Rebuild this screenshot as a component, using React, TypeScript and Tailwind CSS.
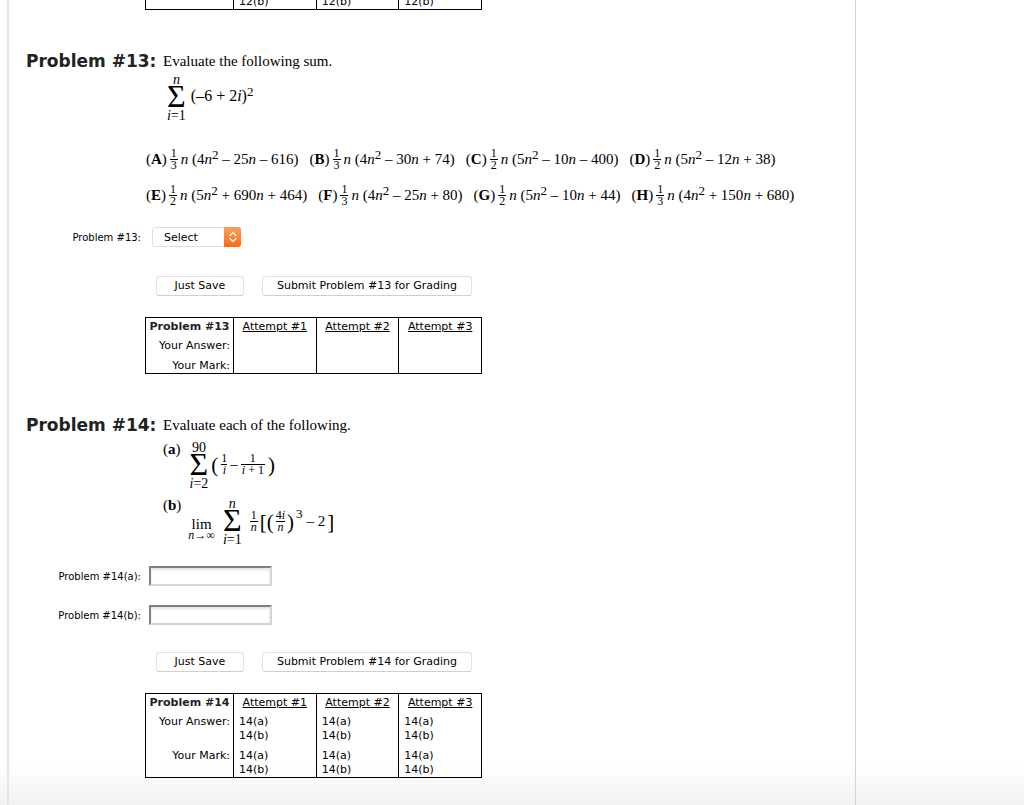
import type { ReactNode } from "react";

function Frac({ top, bottom }: { top: ReactNode; bottom: ReactNode }) {
  return (
    <span className="inline-flex flex-col items-center text-[12px] leading-[11px]">
      <span>{top}</span>
      <span className="w-full border-t border-black px-px text-center">{bottom}</span>
    </span>
  );
}

function Sum({ from, to }: { from: string; to: ReactNode }) {
  return (
    <span className="flex flex-col items-center text-[14px]">
      <span className="leading-[10px]">{to}</span>
      <span className="text-[32px] leading-[22px]">Σ</span>
      <span className="leading-[17px]">
        <i>i</i>={from}
      </span>
    </span>
  );
}

type Option = { letter: string; den: string; lead: string; mid: string; end: string };

const optionRows: Option[][] = [
  [
    { letter: "A", den: "3", lead: "4", mid: "– 25", end: "– 616" },
    { letter: "B", den: "3", lead: "4", mid: "– 30", end: "+ 74" },
    { letter: "C", den: "2", lead: "5", mid: "– 10", end: "– 400" },
    { letter: "D", den: "2", lead: "5", mid: "– 12", end: "+ 38" },
  ],
  [
    { letter: "E", den: "2", lead: "5", mid: "+ 690", end: "+ 464" },
    { letter: "F", den: "3", lead: "4", mid: "– 25", end: "+ 80" },
    { letter: "G", den: "2", lead: "5", mid: "– 10", end: "+ 44" },
    { letter: "H", den: "3", lead: "4", mid: "+ 150", end: "+ 680" },
  ],
];

function Choice({ letter, den, lead, mid, end }: Option) {
  return (
    <span className="flex items-center whitespace-nowrap">
      <span>
        (<b>{letter}</b>)
      </span>
      <span className="mx-[3px] flex">
        <Frac top="1" bottom={den} />
      </span>
      <span>
        <i>n</i> ({lead}
        <i>n</i>
        <sup className="top-[-5px] text-[13px]">2</sup> {mid}
        <i>n</i> {end})
      </span>
    </span>
  );
}

function Heading({ n, children }: { n: number; children: ReactNode }) {
  return (
    <div className="flex items-start pl-[17px] leading-5">
      <h2 className="w-[137px] shrink-0 whitespace-nowrap font-['DejaVu_Sans',sans-serif] text-[17px] leading-5 font-bold text-[#222]">
        Problem #{n}:
      </h2>
      <p>{children}</p>
    </div>
  );
}

function Buttons({ n }: { n: number }) {
  const style =
    "h-5 rounded-[3px] border border-[#e2e2e2] border-b-[#cfcfcf] bg-white text-[11px] leading-4 text-black";
  return (
    <div className="flex gap-[18px] pl-[147px] font-['DejaVu_Sans',sans-serif]">
      <button type="button" className={style + " w-[88px]"}>
        Just Save
      </button>
      <button type="button" className={style + " w-[210px] whitespace-nowrap"}>
        Submit Problem #{n} for Grading
      </button>
    </div>
  );
}

const tableStyle =
  "ml-[136px] w-[337px] table-fixed border-separate border-spacing-0 border border-black font-['DejaVu_Sans',sans-serif] text-[11px] leading-[14px]";

function Attempts({ n, parts }: { n: number; parts: string[] }) {
  const rows = ["Your Answer:", "Your Mark:"];
  return (
    <table className={tableStyle}>
      <thead>
        <tr>
          <th scope="col" className="w-[87px] whitespace-nowrap py-0.5 font-bold text-[#222]">
            Problem #{n}
          </th>
          {[1, 2, 3].map((k) => (
            <th key={k} scope="col" className="border-l border-black py-0.5 font-normal underline">
              Attempt #{k}
            </th>
          ))}
        </tr>
      </thead>
      <tbody>
        {rows.map((r) => (
          <tr key={r} className="last:[&>*]:pb-0">
            <th scope="row" className="whitespace-nowrap pt-[3px] pr-[3px] pb-[3px] text-right align-top font-normal">
              {r}
            </th>
            {[1, 2, 3].map((k) => (
              <td key={k} className="border-l border-black pt-[3px] pb-[3px] pl-[5px] align-top">
                {parts.map((p) => (
                  <div key={p}>
                    {n}({p})
                  </div>
                ))}
              </td>
            ))}
          </tr>
        ))}
      </tbody>
    </table>
  );
}

export default function App() {
  const label =
    "w-[132px] shrink-0 whitespace-nowrap text-right font-['DejaVu_Sans',sans-serif] text-[10px]";
  const field =
    "h-5 w-[123px] border-2 border-t-[#808080] border-r-[#d4d4d4] border-b-[#d4d4d4] border-l-[#808080] bg-white px-1 text-[12px] shadow-[inset_0_2px_3px_#e4e4e4]";
  return (
    <div className="min-h-screen bg-[linear-gradient(to_top,#f2f2f2,#ffffff_40px)] pl-[7px] font-['Liberation_Serif',serif] text-[15px] text-black">
      <main className="min-h-screen w-full max-w-[849px] border-r border-l-2 border-r-[#d4d4d4] border-l-[#e6e6e6]">
        <div className="flex h-[10px] items-end overflow-hidden">
          <table className={tableStyle}>
            <tbody>
              <tr>
                <td className="w-[87px]" />
                {[1, 2, 3].map((k) => (
                  <td key={k} className="border-l border-black pl-[5px]">
                    12(b)
                  </td>
                ))}
              </tr>
            </tbody>
          </table>
        </div>

        <section className="pt-[41px]">
          <Heading n={13}>Evaluate the following sum.</Heading>
          <div className="flex items-center gap-[5px] pt-1 pl-[158px]">
            <Sum from="1" to={<i>n</i>} />
            <span className="pb-2 text-[16px]">
              (–6 + 2<i>i</i>)<sup className="top-[-5px] text-[13px]">2</sup>
            </span>
          </div>
          <div className="pt-[17px] pl-[137px]">
            {optionRows.map((row) => (
              <div key={row[0].letter} className="flex h-9 items-center gap-[11px]">
                {row.map((o) => (
                  <Choice key={o.letter} {...o} />
                ))}
              </div>
            ))}
          </div>
          <div className="flex items-center gap-[11px] pt-[14px]">
            <label htmlFor="p13" className={label}>
              Problem #13:
            </label>
            <div className="relative">
              <select
                id="p13"
                className="block h-5 w-[89px] appearance-none rounded-[3px] border border-[#dedede] bg-white pt-px pl-[11px] font-['DejaVu_Sans',sans-serif] text-[11px] leading-4"
              >
                <option>Select</option>
                {"ABCDEFGH".split("").map((c) => (
                  <option key={c}>{c}</option>
                ))}
              </select>
              <span className="pointer-events-none absolute inset-y-0 right-0 flex w-[17px] items-center justify-center rounded-r-[3px] bg-linear-to-b from-[#fba055] to-[#f96a0a]">
                <svg viewBox="0 0 8 12" className="h-3 w-2" fill="none" stroke="white" strokeWidth="1.3" strokeLinecap="round" strokeLinejoin="round">
                  <path d="M1 4.5 4 1.5 7 4.5M1 7.5 4 10.5 7 7.5" />
                </svg>
              </span>
            </div>
          </div>
          <div className="pt-[29px] pb-[21px]">
            <Buttons n={13} />
          </div>
          <Attempts n={13} parts={[]} />
        </section>

        <section className="pt-[41px]">
          <Heading n={14}>Evaluate each of the following.</Heading>
          <div className="flex items-start gap-[9px] pt-1 pl-[154px]">
            <span className="leading-5">
              (<b>a</b>)
            </span>
            <div className="flex items-center gap-[3px] pt-1">
              <Sum from="2" to="90" />
              <span className="flex items-center gap-[3px] pb-1.5">
                <span className="text-[21px] leading-5">(</span>
                <Frac top="1" bottom={<i>i</i>} />
                <span>–</span>
                <Frac top="1" bottom={<><i>i</i> + 1</>} />
                <span className="text-[21px] leading-5">)</span>
              </span>
            </div>
          </div>
          <div className="flex items-start gap-[7px] pt-[3px] pl-[154px]">
            <span className="leading-5">
              (<b>b</b>)
            </span>
            <div className="flex items-center gap-2 pt-1">
              <span className="flex flex-col items-center pt-[9px]">
                <span className="leading-[14px]">lim</span>
                <span className="text-[12px] leading-[8px]">
                  <i>n</i>→∞
                </span>
              </span>
              <Sum from="1" to={<i>n</i>} />
              <span className="flex items-center gap-[2px] pb-1">
                <Frac top="1" bottom={<i>n</i>} />
                <span className="text-[21px] leading-5">[(</span>
                <Frac top={<>4<i>i</i></>} bottom={<i>n</i>} />
                <span className="text-[21px] leading-5">)</span>
                <span className="self-start text-[13px] leading-2">3</span>
                <span className="pl-0.5">– 2</span>
                <span className="text-[21px] leading-5">]</span>
              </span>
            </div>
          </div>
          <div className="flex flex-col gap-[19px] pt-[18px]">
            {["a", "b"].map((p) => (
              <div key={p} className="flex items-center gap-2">
                <label htmlFor={"p14" + p} className={label}>
                  Problem #14({p}):
                </label>
                <input id={"p14" + p} type="text" className={field} />
              </div>
            ))}
          </div>
          <div className="pt-[27px] pb-[21px]">
            <Buttons n={14} />
          </div>
          <Attempts n={14} parts={["a", "b"]} />
        </section>
      </main>
    </div>
  );
}
